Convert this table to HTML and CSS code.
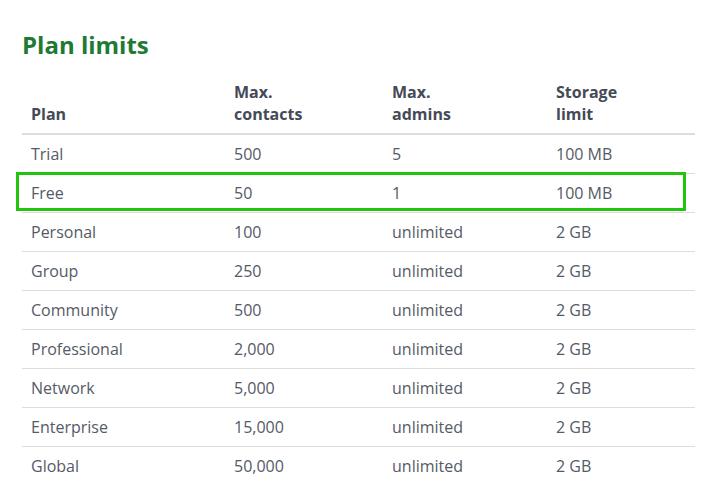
FILE: index.html
```html
<!DOCTYPE html>
<html>
<head>
<meta charset="utf-8">
<link rel="stylesheet" href="styles.css">
</head>
<body>
<main class="page">
  <h2 class="title">Plan limits</h2>
  <div class="table-wrap">
    <table class="limits">
      <colgroup>
        <col class="c1"><col class="c2"><col class="c3"><col class="c4">
      </colgroup>
      <thead>
        <tr><th>Plan</th><th>Max.<br>contacts</th><th>Max.<br>admins</th><th>Storage<br>limit</th></tr>
      </thead>
      <tbody>
        <tr><td>Trial</td><td>500</td><td>5</td><td>100 MB</td></tr>
        <tr class="hl"><td>Free</td><td>50</td><td>1</td><td>100 MB</td></tr>
        <tr><td>Personal</td><td>100</td><td>unlimited</td><td>2 GB</td></tr>
        <tr><td>Group</td><td>250</td><td>unlimited</td><td>2 GB</td></tr>
        <tr><td>Community</td><td>500</td><td>unlimited</td><td>2 GB</td></tr>
        <tr><td>Professional</td><td>2,000</td><td>unlimited</td><td>2 GB</td></tr>
        <tr><td>Network</td><td>5,000</td><td>unlimited</td><td>2 GB</td></tr>
        <tr><td>Enterprise</td><td>15,000</td><td>unlimited</td><td>2 GB</td></tr>
        <tr><td>Global</td><td>50,000</td><td>unlimited</td><td>2 GB</td></tr>
      </tbody>
    </table>
    <div class="highlight"></div>
  </div>
</main>
</body>
</html>
```
FILE: styles.css
```css
html, body { margin: 0; padding: 0; background: #fff; }
body { font-family: "Open Sans", "Liberation Sans", sans-serif; color: #555a66; }
.page { padding: 29px 24px 0 22px; }
.title {
  margin: 0 0 20px 0;
  font-size: 24px;
  line-height: 32px;
  font-weight: 700;
  color: #1e7a34;
}
.table-wrap { position: relative; }
.limits {
  width: 673px;
  border-collapse: collapse;
  table-layout: fixed;
  font-size: 16px;
}
.c1 { width: 203px; }
.c2 { width: 158px; }
.c3 { width: 164px; }
.c4 { width: 148px; }
.limits th {
  text-align: left;
  vertical-align: bottom;
  font-weight: 700;
  color: #454a57;
  line-height: 22px;
  padding: 0 9px 8px 9px;
  border-bottom: 2px solid #dddddd;
}
.limits td {
  padding: 0 9px;
  height: 38px;
  line-height: 22px;
  border-bottom: 1px solid #dddddd;
  color: #555a66;
}
.limits tbody tr:last-child td { border-bottom: none; }
.highlight {
  position: absolute;
  left: -6px;
  top: 91px;
  width: 664px;
  height: 33px;
  border: 3px solid #22c40e;
  pointer-events: none;
}
```
